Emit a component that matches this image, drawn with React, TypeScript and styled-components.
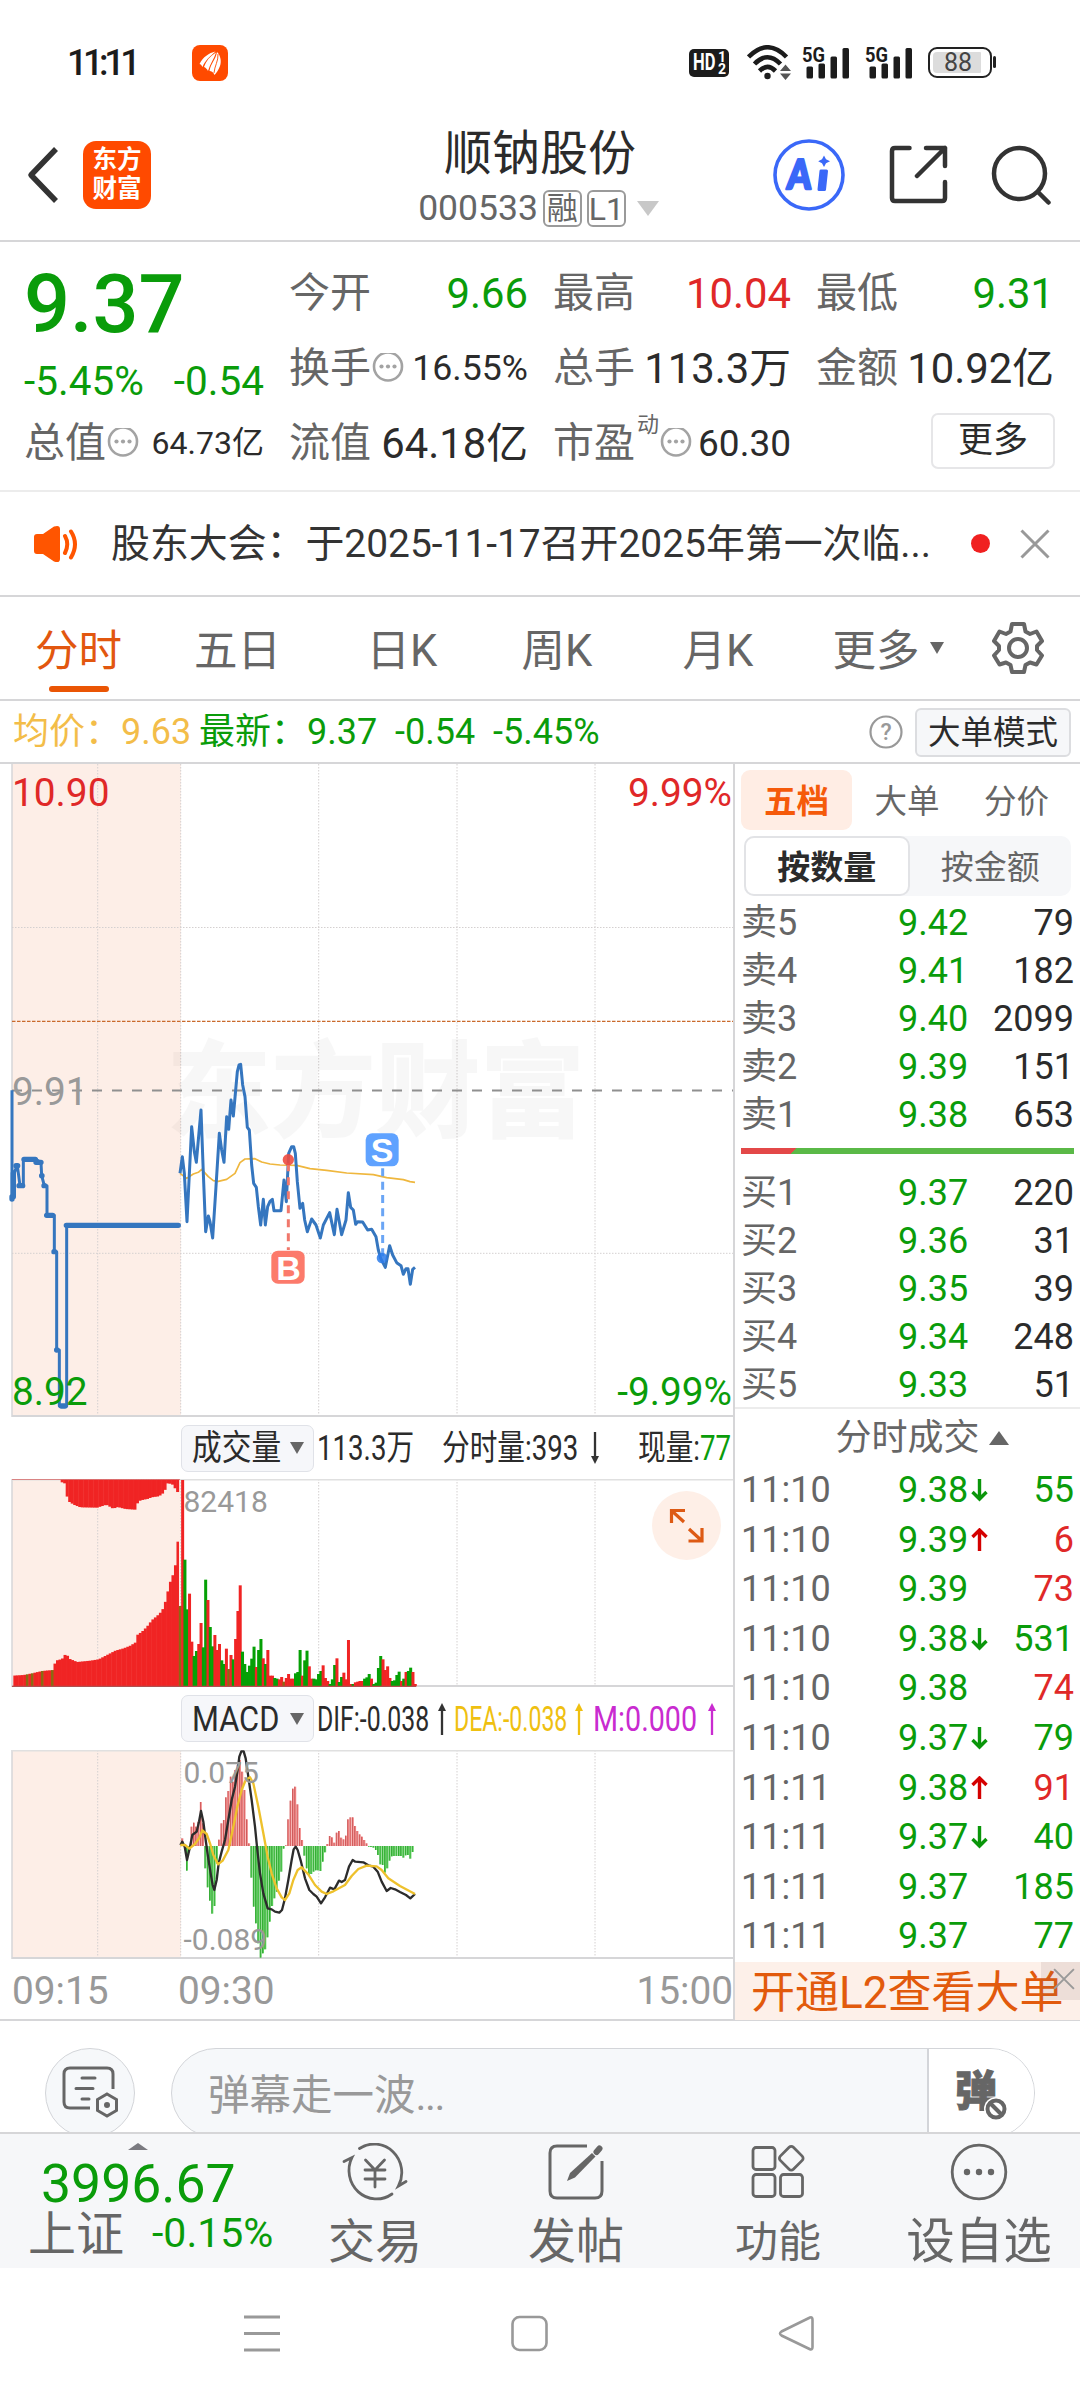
import React from 'react';
import styled, { createGlobalStyle } from 'styled-components';

const GREEN = '#0a9c0a';
const RED = '#e02828';
const INK = '#2b2b2b';
const GREY = '#666';
const LINE = '#d6d6d8';
const ORANGE = '#ea5504';
const FONT = "Roboto, 'Noto Sans CJK SC', sans-serif";

const Global = createGlobalStyle`
  * { box-sizing: border-box; }
  body { margin: 0; background: #fff; font-family: ${FONT}; color: ${INK}; }
  svg { display: block; flex: none; }
`;

const Screen = styled.div`
  width: 1080px;
  height: 2400px;
  display: flex;
  flex-direction: column;
  overflow: hidden;
  background: #fff;
`;

/* ---------- status bar ---------- */
const StatusBar = styled.div`
  height: 110px;
  padding: 15px 88px 0 67px;
  display: flex;
  align-items: center;
  justify-content: space-between;
`;
const StatusSide = styled.div`
  display: flex;
  align-items: center;
`;
const Clock = styled.span`
  width: 125px;
  font-size: 36px;
  line-height: 40px;
  font-weight: 500;
  letter-spacing: -4.4px;
  color: #1c1c1c;
`;
const HdBadge = styled.div`
  width: 40px;
  height: 28px;
  margin-right: 18px;
  padding-left: 4px;
  display: flex;
  align-items: center;
  border-radius: 5px;
  background: #1c1c1c;
  color: #fff;
  font-weight: 700;
`;
const HdText = styled.span`
  width: 24px;
  font-size: 23px;
  line-height: 28px;
  transform: scaleX(0.72);
  transform-origin: 0 50%;
`;
const HdDigits = styled.span`
  display: flex;
  flex-direction: column;
  font-size: 14px;
  line-height: 12px;
  margin-left: 1px;
`;
const Battery = styled.div`
  position: relative;
  width: 64px;
  height: 31px;
  margin-left: 15px;
  padding: 2.5px;
  border: 2.5px solid #222;
  border-radius: 9px;
  &::after {
    content: '';
    position: absolute;
    right: -6px;
    top: 7px;
    width: 3px;
    height: 12px;
    border-radius: 2px;
    background: #222;
  }
`;
const BatteryFill = styled.div`
  width: 48px;
  height: 21px;
  border-radius: 4px 1px 1px 4px;
  background: #dcdcdc;
  font-size: 25px;
  line-height: 22px;
  text-align: center;
  padding-left: 3px;
  color: #444;
`;

/* ---------- header ---------- */
const Header = styled.header`
  height: 132px;
  display: flex;
  border-bottom: 2px solid ${LINE};
`;
const HeaderLeft = styled.div`
  width: 310px;
  padding: 0 0 1px 27px;
  display: flex;
  align-items: center;
  gap: 24px;
`;
const HeaderRight = styled.div`
  width: 310px;
  padding: 0 29px 1px 3px;
  display: flex;
  align-items: center;
  justify-content: space-between;
`;
const Brand = styled.div`
  width: 68px;
  height: 68px;
  padding-top: 4px;
  border-radius: 13px;
  background: #ff4a00;
  color: #fff;
  font-size: 24.5px;
  font-weight: 700;
  line-height: 29px;
  text-align: center;
`;
const HeaderCenter = styled.div`
  flex: 1;
  padding-top: 16px;
  display: flex;
  flex-direction: column;
  align-items: center;
  gap: 8px;
`;
const StockName = styled.div`
  font-size: 48px;
  line-height: 56px;
`;
const CodeRow = styled.div`
  display: flex;
  align-items: center;
  gap: 5px;
  margin: -1px 3px 0 0;
  font-size: 35.5px;
  line-height: 38px;
  color: ${GREY};
`;
const Tag = styled.span<{ $size: number }>`
  width: 39px;
  height: 37px;
  border: 2px solid #9a9a9a;
  border-radius: 6px;
  font-size: ${(p) => p.$size}px;
  line-height: 34px;
  text-align: center;
`;
const Triangle = styled.span<{ $w: number; $h: number; $color?: string; $up?: boolean }>`
  width: 0;
  height: 0;
  flex: none;
  border-left: ${(p) => p.$w / 2}px solid transparent;
  border-right: ${(p) => p.$w / 2}px solid transparent;
  ${(p) => (p.$up ? 'border-bottom' : 'border-top')}: ${(p) => p.$h}px solid ${(p) => p.$color ?? GREY};
`;
const CodeCaret = styled(Triangle)`
  margin-left: 6px;
`;

/* ---------- quote ---------- */
const Quote = styled.section`
  height: 250px;
  padding: 14px 0 0 24px;
  display: grid;
  grid-template-columns: 240px 239px 238px 238px;
  grid-template-rows: repeat(3, 75px);
  column-gap: 25px;
  border-bottom: 2px solid #ececec;
`;
const PriceBlock = styled.div`
  grid-row: span 2;
`;
const BigPrice = styled.div`
  font-size: 81px;
  font-weight: 500;
  line-height: 98px;
  color: ${GREEN};
`;
const ChangeRow = styled.div`
  display: flex;
  justify-content: space-between;
  font-size: 40.5px;
  line-height: 54px;
  color: ${GREEN};
`;
const Cell = styled.div`
  display: flex;
  align-items: center;
  justify-content: space-between;
  line-height: 75px;
  white-space: nowrap;
`;
const CellLabel = styled.span`
  display: flex;
  align-items: center;
  font-size: 41px;
  color: ${GREY};
`;
const CellValue = styled.span<{ $color?: string; $size?: number }>`
  font-size: ${(p) => p.$size ?? 41.8}px;
  color: ${(p) => p.$color ?? INK};
`;
const Sup = styled.sup`
  align-self: flex-start;
  margin: 5px 0 0 2px;
  font-size: 22px;
  line-height: 28px;
`;
const MoreCell = styled.div`
  display: flex;
  align-items: center;
  justify-content: flex-end;
`;
const MoreButton = styled.button`
  width: 124px;
  height: 56px;
  margin: -5px -1px 0 0;
  padding: 0;
  border: 2px solid #e6e6e8;
  border-radius: 7px;
  background: #fff;
  font: 35px/52px ${FONT};
  color: ${INK};
`;

/* ---------- notice ---------- */
const Notice = styled.div`
  height: 105px;
  padding: 0 30px 0 33px;
  display: flex;
  align-items: center;
  border-bottom: 2px solid ${LINE};
`;
const NoticeText = styled.div`
  flex: 1;
  padding-left: 32px;
  font-size: 38.9px;
  line-height: 60px;
  white-space: nowrap;
  color: #333;
`;
const RedDot = styled.span`
  width: 19px;
  height: 19px;
  margin-right: 30px;
  border-radius: 50%;
  background: #f02020;
`;

/* ---------- period tabs ---------- */
const Tabs = styled.nav`
  height: 104px;
  display: grid;
  grid-template-columns: 157px 161px 168px 142px 180px 160px 100px;
  border-bottom: 2px solid ${LINE};
`;
const Tab = styled.div<{ $active?: boolean }>`
  position: relative;
  display: flex;
  align-items: center;
  justify-content: center;
  gap: 10px;
  padding-bottom: 1px;
  font-size: 43.5px;
  color: ${(p) => (p.$active ? '#e2570f' : GREY)};
  &::after {
    content: '';
    display: ${(p) => (p.$active ? 'block' : 'none')};
    position: absolute;
    bottom: 7px;
    width: 60px;
    height: 6px;
    border-radius: 3px;
    background: ${ORANGE};
  }
`;

/* ---------- average / latest line ---------- */
const InfoBar = styled.div`
  height: 63px;
  padding: 1px 9px 0 13px;
  display: flex;
  align-items: center;
  font-size: 36px;
  line-height: 56px;
  border-bottom: 2px solid ${LINE};
`;
const Average = styled.span`
  width: 186px;
  color: #f3bd49;
`;
const Latest = styled.span`
  flex: 1;
  white-space: pre;
  color: ${GREEN};
`;
const ModeButton = styled.button`
  width: 156px;
  height: 49px;
  margin-left: 12px;
  padding: 1px 0 0;
  border: 2px solid #dcdde0;
  border-radius: 6px;
  background: #f6f7f9;
  font: 32.5px/44px ${FONT};
  color: ${INK};
`;

/* ---------- main area ---------- */
const Main = styled.main`
  height: 1257px;
  display: flex;
  border-bottom: 2px solid ${LINE};
`;
const Charts = styled.div`
  width: 735px;
  border-right: 2px solid ${LINE};
`;
const ChartHead = styled.div<{ $h: number }>`
  height: ${(p) => p.$h}px;
  padding-left: 181px;
  display: flex;
  align-items: center;
  font-size: 35px;
  line-height: 46px;
`;
const Picker = styled.div`
  width: 133px;
  height: 47px;
  padding: 0 9px 0 10px;
  margin-right: 3px;
  display: flex;
  align-items: center;
  justify-content: space-between;
  border: 1.5px solid #e0e2e8;
  border-radius: 7px;
  background: #f6f7fa;
`;
const Narrow = styled.span<{ $w: number; $k: number; $color?: string }>`
  display: block;
  width: ${(p) => p.$w}px;
  padding-top: 2px;
  white-space: nowrap;
  color: ${(p) => p.$color ?? INK};
  & > span {
    display: inline-block;
    transform: scaleX(${(p) => p.$k});
    transform-origin: 0 50%;
  }
`;
const TimeAxis = styled.div`
  height: 59px;
  padding: 4px 0 0 12px;
  display: grid;
  grid-template-columns: 166px 1fr auto;
  align-items: center;
  font-size: 38.8px;
  line-height: 50px;
  color: #999;
`;

/* ---------- order book ---------- */
const Book = styled.aside`
  width: 345px;
  display: flex;
  flex-direction: column;
  & > * {
    flex: none;
  }
`;
const BookTabs = styled.div`
  margin: 6px 9px 6px 6px;
  display: grid;
  grid-template-columns: 111px 110px 1fr;
`;
const BookTab = styled.div<{ $active?: boolean }>`
  height: 60px;
  border-radius: 9px;
  font-size: 32.5px;
  line-height: 64px;
  text-align: center;
  font-weight: ${(p) => (p.$active ? 700 : 400)};
  color: ${(p) => (p.$active ? '#f55a0a' : GREY)};
  background: ${(p) => (p.$active ? '#ffede4' : 'transparent')};
`;
const Segment = styled.div`
  height: 60px;
  margin: 0 9px 3px;
  display: flex;
  border-radius: 10px;
  background: #f6f7f9;
`;
const SegmentItem = styled.div<{ $active?: boolean }>`
  flex: 1;
  font-size: 33px;
  line-height: 64px;
  text-align: center;
  color: ${GREY};
  ${(p) =>
    p.$active &&
    `color: ${INK}; font-weight: 700; background: #fff; border: 2px solid #e2e3e6; border-radius: 10px; line-height: 60px;`}
`;
const Level = styled.div<{ $h: number }>`
  height: ${(p) => p.$h}px;
  padding: 0 6px;
  display: grid;
  grid-template-columns: 157px 73px 20px 1fr;
  align-items: center;
  font-size: 36px;
  line-height: ${(p) => p.$h}px;
`;
const Muted = styled.span`
  color: ${GREY};
`;
const Price = styled.span`
  color: ${GREEN};
`;
const Amount = styled.span<{ $color?: string }>`
  text-align: right;
  color: ${(p) => p.$color ?? INK};
`;
const Ratio = styled.div`
  height: 6px;
  margin: 9px 6px 15px;
  background: linear-gradient(135deg, #e34848 0 39px, #5ab947 39px);
`;
const TradesHead = styled.div`
  height: 59px;
  margin-top: -2px;
  padding: 0 0 0 29px;
  display: flex;
  align-items: center;
  justify-content: center;
  gap: 9px;
  border-top: 2px solid #ececec;
  font-size: 36px;
  line-height: 56px;
  color: ${GREY};
`;
const Promo = styled.div`
  position: relative;
  height: 58px;
  padding-left: 16px;
  background: #fdf0e9;
  font-size: 44px;
  line-height: 63px;
  white-space: nowrap;
  color: #e25a0c;
`;
const PromoClose = styled.div`
  position: absolute;
  top: 0;
  right: 0;
  width: 39px;
  height: 38px;
  padding: 0 0 4px 6px;
  display: flex;
  align-items: center;
  justify-content: center;
  background: rgba(120, 100, 95, 0.12);
`;

/* ---------- comment bar ---------- */
const CommentBar = styled.div`
  height: 111px;
  padding: 27px 45px 0;
  display: flex;
  gap: 36px;
  overflow: hidden;
`;
const RoundButton = styled.div`
  width: 90px;
  height: 90px;
  flex: none;
  display: flex;
  align-items: center;
  justify-content: center;
  border: 1.5px solid #d3d5d9;
  border-radius: 50%;
  background: #f6f8fa;
`;
const InputPill = styled.div`
  flex: 1;
  height: 90px;
  display: flex;
  overflow: hidden;
  border: 1.5px solid #d3d5d9;
  border-radius: 45px;
  background: #f6f8fa;
`;
const Placeholder = styled.div`
  flex: 1;
  padding-left: 36px;
  font-size: 41.5px;
  line-height: 94px;
  color: #999;
`;
const Ellipsis = styled.span`
  letter-spacing: -1.4px;
`;
const BarrageToggle = styled.div`
  position: relative;
  width: 107px;
  padding-left: 26px;
  border-left: 2px solid #d3d5d9;
  background: #fff;
  font-size: 42px;
  font-weight: 900;
  line-height: 86px;
  color: ${GREY};
  -webkit-text-stroke: 1px ${GREY};
`;
const BanBadge = styled.div`
  position: absolute;
  left: 55px;
  top: 48px;
`;

/* ---------- bottom bar ---------- */
const Bottom = styled.div`
  height: 136px;
  display: grid;
  grid-template-columns: 290px 170px 232px 172px 230px;
  border-top: 2px solid ${LINE};
  background: #f6f7f9;
`;
const IndexBlock = styled.div`
  position: relative;
  padding: 20px 0 0 28px;
`;
const IndexCaret = styled(Triangle)`
  position: absolute;
  left: 128px;
  top: 9px;
`;
const IndexValue = styled.div`
  padding-left: 13px;
  font-size: 53.5px;
  line-height: 60px;
  color: ${GREEN};
`;
const IndexRow = styled.div`
  display: flex;
  align-items: center;
  gap: 28px;
  margin-top: -6px;
  font-size: 48px;
  line-height: 54px;
  color: ${GREY};
`;
const IndexChange = styled.span`
  margin-top: -4px;
  font-size: 41px;
  color: ${GREEN};
`;
const Action = styled.div<{ $size: number }>`
  display: flex;
  flex-direction: column;
  align-items: center;
  padding-top: 9px;
  font-size: ${(p) => p.$size}px;
  line-height: 62px;
  color: ${GREY};
  white-space: nowrap;
  & > svg {
    margin-bottom: 10px;
  }
`;
const SystemNav = styled.div`
  flex: 1;
  padding: 46px 265px 0 244px;
  display: flex;
  justify-content: space-between;
`;

/* ---------- icons ---------- */
const AppIcon = () => (
  <svg width="36" height="36" viewBox="0 0 36 36">
    <rect width="36" height="36" rx="8" fill="#ff4a00" />
    <path d="M7.500 19C11 12 17 8 23.500 6.500C17 12 13 16 10.500 22C9.500 20 8.500 19 7.500 19Z" fill="#fff" />
    <path d="M12 22C14 16 18 11 24 7.500C22 14 18 19 16 26C15 24 13.500 22.500 12 22Z" fill="#fff" />
    <path d="M17.500 26C18.500 19 24 14 25 7C29 11 29.500 17 28 21C26.500 25 24.500 28 22.500 30C21.500 27.500 19.500 26 17.500 26Z" fill="#fff" />
    <path d="M22 28C22.500 21 26.500 16 26 9" stroke="#ff4a00" strokeWidth="0.900" fill="none" />
  </svg>
);
const WifiIcon = () => (
  <svg width="46" height="35" viewBox="0 0 46 35" fill="none" stroke="#1c1c1c" strokeWidth="4.600">
    <path d="M1.500 12Q20.500 -7.500 39.500 12" />
    <path d="M7.500 19Q20.500 5.500 33.500 19" />
    <path d="M12.500 26Q20.500 18 28.500 26" />
    <circle cx="20.500" cy="31" r="3.200" fill="#1c1c1c" stroke="none" />
    <path d="M33 26L38.500 19.500L44 26ZM33 28.500L38.500 35L44 28.500Z" fill="#555" stroke="none" />
  </svg>
);
const SignalIcon = ({ gap }: { gap: number }) => (
  <svg width={47 + gap} height="34" viewBox={`${-gap} 0 ${47 + gap} 34`} overflow="visible">
    <text x="-1" y="16" fontFamily="Roboto" fontWeight="700" fontSize="21" textLength="23" lengthAdjust="spacingAndGlyphs" fill="#1c1c1c">5G</text>
    {[[3.500, 20.500], [15.500, 17.500], [27.500, 10.500], [39.500, 2]].map(([x, y]) => (
      <rect key={x} x={x} y={y} width="6.500" height={32.500 - y} rx="1.500" fill="#1c1c1c" />
    ))}
  </svg>
);
const BackIcon = () => (
  <svg width="32" height="56" viewBox="0 0 32 56" fill="none" stroke="#333" strokeWidth="5.500">
    <path d="M29 2L4 28L29 54" strokeLinejoin="round" />
  </svg>
);
const AiIcon = () => (
  <svg width="72" height="72" viewBox="0 0 72 72">
    <circle cx="36" cy="36" r="34" fill="#fff" stroke="#3a68f8" strokeWidth="3.600" />
    <g transform="translate(13.500 49.500) skewX(-4) scale(0.830 1)">
      <text fontFamily="Lato" fontWeight="900" fontSize="41" fill="#3a68f8" stroke="#3a68f8" strokeWidth="2.600" strokeLinejoin="round">A</text>
    </g>
    <path d="M48 32H53.500L51.500 50.500H46Z" fill="#3a68f8" stroke="#3a68f8" strokeWidth="3" strokeLinejoin="round" />
    <path d="M51 16.500L53 20.300L57 22.300L53 24.300L51 28L49 24.300L45.200 22.300L49 20.300Z" fill="#3a68f8" />
  </svg>
);
const ShareIcon = () => (
  <svg width="59" height="59" viewBox="0 0 59 59" fill="none" stroke="#333" strokeWidth="4.500" strokeLinecap="round" strokeLinejoin="round">
    <path d="M20.500 3H6Q3 3 3 6V53Q3 56 6 56H53Q56 56 56 53V37" />
    <path d="M37 3H56V21M56 3L28 31" />
  </svg>
);
const SearchIcon = () => (
  <svg width="60" height="60" viewBox="0 0 60 60" fill="none" stroke="#333" strokeWidth="4.500" strokeLinecap="round">
    <circle cx="28.500" cy="28.500" r="25.500" />
    <path d="M47 47L57.500 57.500" />
  </svg>
);
const DotsIcon = () => (
  <svg width="33" height="32" viewBox="0 0 33 32">
    <circle cx="17" cy="13.500" r="14" fill="none" stroke="#a3a3a3" strokeWidth="2.600" />
    {[10.500, 17, 23.500].map((x) => <circle key={x} cx={x} cy="13.500" r="2.100" fill="#a3a3a3" />)}
  </svg>
);
const SpeakerIcon = () => (
  <svg width="46" height="38" viewBox="0 0 46 38">
    <path d="M4 9H10L21 1.500Q27 -0.500 27 4V34Q27 38.500 21 36.500L10 29H4Q1 29 1 26V12Q1 9 4 9Z" fill="#ff5500" />
    <path d="M32 11Q36.500 19 32 28M38 6.500Q46 19 38 32.500" fill="none" stroke="#ff5500" strokeWidth="4" strokeLinecap="round" />
  </svg>
);
const CloseIcon = ({ size, w }: { size: number; w: number }) => (
  <svg width={size} height={size} viewBox="0 0 30 30" stroke="#999" strokeWidth={w}>
    <path d="M1.500 1.500L28.500 28.500M28.500 1.500L1.500 28.500" />
  </svg>
);
const GearIcon = () => (
  <svg width="52" height="54" viewBox="0 0 52 54" fill="none" stroke={GREY} strokeWidth="4">
    <path d="M20 3H32L33.500 10.500L38 13L44.500 10.500L50 20L45 25V29L50 34.500L44.500 43.500L38 41.500L33.500 44L32 51H20L18.500 44L14 41.500L7.500 43.500L2 34.500L7 29V25L2 20L7.500 10.500L14 13L18.500 10.500Z" strokeLinejoin="round" />
    <circle cx="26" cy="27" r="9" />
  </svg>
);
const HelpIcon = () => (
  <svg width="34" height="34" viewBox="0 0 34 34">
    <circle cx="17" cy="17" r="15.500" fill="none" stroke="#999" strokeWidth="2.200" />
    <text x="17" y="25" textAnchor="middle" fontFamily="Roboto" fontWeight="500" fontSize="23" fill="#999">?</text>
  </svg>
);
const TradeArrow = ({ up }: { up?: boolean }) => (
  <svg width="17" height="24" viewBox="0 0 17 24" fill="none" stroke={up ? '#d40000' : '#0a960a'} strokeWidth="3.400">
    <path d={up ? 'M8.500 23V2M1.500 9L8.500 2L15.500 9' : 'M8.500 0V20M1.500 13L8.500 20L15.500 13'} />
  </svg>
);
const ThinArrow = ({ up, color, box }: { up?: boolean; color: string; box: number }) => (
  <svg width={box} height="32" viewBox={`0 0 ${box} 32`}>
    <g transform={up ? undefined : 'rotate(180 4 16)'}>
      <path d="M4 4V32" stroke={color} strokeWidth="2.300" />
      <path d="M0 8L4 0L8 8Z" fill={color} />
    </g>
  </svg>
);
const NoteIcon = () => (
  <svg width="58" height="54" viewBox="0 0 58 54" fill="none" stroke={GREY} strokeWidth="3">
    <path d="M29 42H9Q3 42 3 36V8Q3 2 9 2H46Q52 2 52 8V23" />
    <path d="M21 12H34M15 22.500H32M21 33H28" strokeLinecap="round" />
    <path d="M46 28L55.500 33.500V44.500L46 50L36.500 44.500V33.500Z" />
    <circle cx="46" cy="39" r="3" fill={GREY} stroke="none" />
  </svg>
);
const BanIcon = () => (
  <svg width="24" height="24" viewBox="0 0 24 24">
    <circle cx="12" cy="12" r="12" fill="#fff" />
    <circle cx="12" cy="12" r="8.500" fill="#fff" stroke={GREY} strokeWidth="4" />
    <path d="M6 6L18 18" stroke={GREY} strokeWidth="4" />
  </svg>
);
const TradeIcon = () => (
  <svg width="66" height="58" viewBox="0 0 66 58" fill="none" stroke={GREY} strokeWidth="2.800" strokeLinecap="round">
    <path d="M17.500 5.500A27.500 28.500 0 0 1 56.500 43L64 38.500" />
    <path d="M50 51A27.500 28.500 0 0 1 10 14.500L2 18.500" />
    <path d="M23.500 17L33 27L42.500 17M23 27H43M23 36H43M33 27V44" />
  </svg>
);
const PostIcon = () => (
  <svg width="56" height="58" viewBox="0 0 56 58" fill="none" stroke={GREY} strokeWidth="3">
    <path d="M39 3H9Q2 3 2 10V48Q2 55 9 55H47Q54 55 54 48V18" />
    <path d="M19 38L22 30L44 10L47.500 13.500L27 34.500Z" fill={GREY} stroke="none" />
    <path d="M48.500 9L51.500 5.500" strokeWidth="6" strokeLinecap="round" />
  </svg>
);
const GridIcon = () => (
  <svg width="54" height="58" viewBox="0 0 54 58" fill="none" stroke={GREY} strokeWidth="2.800">
    <rect x="2" y="4.500" width="22" height="22" rx="3" />
    <rect x="2" y="31.500" width="22" height="22" rx="3" />
    <rect x="29.500" y="31.500" width="22" height="22" rx="3" />
    <rect x="31" y="6" width="18.500" height="18.500" rx="3" transform="rotate(45 40.250 15.250)" />
  </svg>
);
const MoreIcon = () => (
  <svg width="58" height="58" viewBox="0 0 58 58">
    <circle cx="29" cy="29" r="26.800" fill="none" stroke={GREY} strokeWidth="2.800" />
    {[17, 29, 41].map((x) => <circle key={x} cx={x} cy="29" r="3.200" fill={GREY} />)}
  </svg>
);

/* ---------- chart data: drawn on a grid of thirds of a pixel ---------- */
const PRICE =
  '540,520 547,470 553,520 561,665 575,380 583,455 589,487 603,330 610,520 617,695 625,648 630,665 638,714 648,560 658,400 665,450 672,487 680,350 686,388 693,300 700,348 712,215 717,195 722,193 728,255 735,290 742,382 748,390 755,495 761,550 769,562 775,620 782,675 790,598 796,675 803,620 810,604 817,598 822,632 843,632 852,540 859,605 866,460 875,440 881,440 886,460 892,545 900,625 908,610 914,660 922,695 935,657 948,675 961,714 970,675 989,638 1003,704 1011,628 1025,704 1038,660 1045,578 1052,622 1060,630 1067,673 1073,665 1088,666 1103,690 1115,688 1128,710 1135,750 1142,775 1156,802 1169,737 1178,765 1190,788 1203,797 1210,823 1218,806 1224,806 1231,853 1238,808 1245,802';
const AVG =
  '540,520 560,535 580,522 595,517 605,508 625,530 640,542 655,544 680,538 705,520 720,488 735,477 765,476 785,486 810,492 840,495 890,496 930,506 980,511 1040,519 1120,524 1160,533 1210,539 1230,545 1245,547';
const DIF =
  '541,465 547,455 554,470 561,510 570,470 577,435 590,425 597,395 603,363 610,395 617,450 624,500 632,550 638,585 643,600 650,570 656,520 665,485 675,450 685,390 695,330 705,290 713,240 718,200 724,184 731,184 737,205 745,260 755,330 765,410 772,480 780,550 790,610 803,655 815,658 825,665 838,668 846,660 855,625 865,570 875,510 881,478 887,470 893,480 903,515 915,565 928,600 940,612 950,620 963,640 975,622 990,593 1003,598 1017,572 1025,576 1035,570 1047,530 1058,510 1066,515 1090,517 1105,526 1120,530 1133,545 1145,575 1160,603 1172,594 1185,598 1200,606 1218,615 1231,625 1245,612';
const DEA =
  '541,465 555,465 568,476 585,462 597,445 607,421 620,432 630,460 640,495 654,523 668,512 685,480 697,425 712,350 725,300 737,270 750,262 760,280 775,350 790,430 803,500 815,550 830,595 845,622 855,630 868,610 880,570 893,540 905,532 925,553 945,585 965,605 980,612 1000,604 1035,585 1055,558 1075,537 1100,527 1130,529 1145,540 1165,565 1200,588 1245,612';

const VOLUME =
  '588m 210r 449g 598g 551r 695r 738g 723g 702r 639r 712g 509g 570r 651g 709g 675r 720r 702r 751g 762g 716r 777m 735r 748g 687r 603r 526r 725g 762g 786g 767g 746g 710g 771r 720g 687g 745r 762g 720r 797r 797r 804g 806g 808r 801r 815m 804r 792r 806r 806r 790g 786g 720g 797r 751g 722g 769r 806r 806g 808g 792g 783g 766r 804r 813r 822g 808g 765g 745r 816g 801g 788r 808r 690r 822r 822g 817r 815r 813r 813r 806g 802g 792g 806r 822g 818g 774g 738g 748r 780r 769r 804r 813g 811g 795g 785g 813r 806g 786r 783g 773g 786r 822r'.split(' ');
const HIST = [
  445, 462, 542, 480, 410, 398, 410, 395, 336, 400, 535, 592, 632, 671, 648, 520, 449, 400, 390, 322, 303, 260, 275, 240, 225, 210, 245,
  300, 388, 460, 563, 650, 700, 760, 803, 790, 778, 742, 695, 648, 625, 605, 572, 545, 476, 466, 388, 332, 296, 290, 343, 414, 450, 497,
  535, 555, 552, 545, 541, 541, 543, 515, 487, 462, 438, 442, 458, 428, 423, 443, 448, 437, 388, 382, 382, 408, 423, 433, 440, 450, 460,
  470, 471, 473, 480, 495, 523, 525, 548, 535, 512, 499, 498, 498, 498, 498, 503, 496, 495, 506, 486,
];
const AUCTION: number[][] = [
  [37, 797], [70, 795], [95, 790], [125, 783], [158, 780], [166, 752], [185, 747], [197, 730], [206, 746], [230, 756], [270, 752], [295, 748], [320, 735],
  [345, 722], [370, 715], [390, 707], [406, 697], [412, 674], [425, 665], [440, 650], [455, 630], [470, 618], [485, 603], [493, 583],
  [501, 550], [508, 520], [516, 500], [524, 475], [532, 395], [540, 395],
];
const UNMATCHED: number[][] = [
  [182, 217], [192, 217], [199, 257], [206, 275], [220, 284], [240, 292], [290, 293], [318, 284], [338, 296], [352, 291], [375, 297], [404, 299],
  [412, 277], [420, 271], [445, 266], [452, 262], [475, 259], [485, 252], [492, 245], [500, 220], [515, 222], [524, 235], [532, 247], [540, 247],
];
const sample = (pts: number[][], x: number) => {
  const i = Math.max(1, pts.findIndex((p) => p[0] >= x));
  const [x0, y0] = pts[i - 1];
  const [x1, y1] = pts[i];
  return y0 + ((y1 - y0) * Math.max(0, x - x0)) / (x1 - x0);
};
const FILL: Record<string, string> = { r: '#f02424', g: '#05a005', m: '#8a6a12' };
const GRID_X = [97.700, 180.700, 318.700, 457, 595];

const GridLines = ({ h }: { h: number }) => (
  <g>
    <rect x="12" y="0" width="169" height={h} fill="#fdeee7" />
    {GRID_X.map((x) => (
      <line key={x} x1={x} x2={x} y1="0" y2={h} stroke="#d4d0d0" strokeWidth="1" strokeDasharray="1.500 1.500" />
    ))}
    <line x1="12" x2="12" y1="0" y2={h} stroke="#d6d6d8" strokeWidth="1.500" />
    <line x1="12" x2="733" y1={h - 1} y2={h - 1} stroke="#d6d6d8" strokeWidth="2" />
  </g>
);

const PriceChart = () => (
  <svg width="733" height="653" viewBox="0 764 733 653" fontFamily={FONT}>
    <g transform="translate(0 764)"><GridLines h={653} /></g>
    <text x="167" y="1129" fontSize="104" letterSpacing="0.500" fontWeight="700" fill="#000" stroke="#000" strokeWidth="2" opacity="0.026">东方财富</text>
    <path d="M12 927.500H733M12 1253.300H733" stroke="#d4d0d0" strokeDasharray="1.500 1.500" />
    <path d="M12 1021.300H733" stroke="#c96a2c" strokeWidth="1.300" strokeDasharray="3.500 1.500" />
    <path d="M12 1090.500H733" stroke="#909090" strokeWidth="1.800" strokeDasharray="10 10" />
    <g fontSize="38.800">
      <text x="12" y="1105" fill="#999">9.91</text>
      <text x="12" y="806" fill={RED}>10.90</text>
      <text x="732" y="806" textAnchor="end" fill={RED}>9.99%</text>
      <text x="732" y="1405" textAnchor="end" fill={GREEN}>-9.99%</text>
    </g>
    <g transform="translate(0 1000) scale(0.33333)" fill="none" strokeLinejoin="round">
      <polyline points={AVG} stroke="#efb73e" strokeWidth="5" />
      <path d="M36 271V597L44 515L52 497L60 557H70V478H108L123 488L125 527L133 557H141V646H163V755H170V1050H178V1218H200V676H537" stroke="#3576bf" strokeWidth="9" />
      <path d="M36 597V590M40 590V520M48 497H53M57 557H68M72 478H106M108 487H123M125 527H126M132 557H134M140 646H158M162 755H164M170 1050H171M184 1218H195M199 676H535" stroke="#3576bf" strokeWidth="16" strokeLinecap="round" />
      <polyline points={PRICE} stroke="#3576bf" strokeWidth="9" />
      <path d="M865 490V750" stroke="#f0786c" strokeWidth="9" strokeDasharray="24 18" />
      <path d="M1148 505V770" stroke="#6aa5f5" strokeWidth="9" strokeDasharray="24 16" />
      <circle cx="865" cy="479" r="17" fill="#ee4c40" fillOpacity="0.9" />
      <circle cx="1146" cy="774" r="16" fill="#2c7bea" fillOpacity="0.85" />
      <rect x="814" y="752" width="100" height="99" rx="20" fill="#fc7a6b" />
      <rect x="1097" y="400" width="99" height="99" rx="20" fill="#5fa2ff" />
    </g>
    <g fontFamily="Liberation Sans" fontWeight="700" fontSize="34" fill="#fff" textAnchor="middle">
      <text x="288.500" y="1279.500">B</text>
      <text x="382" y="1162">S</text>
    </g>
    <text x="12" y="1405" fontSize="38.800" fill={GREEN}>8.92</text>
  </svg>
);

const VolumeChart = () => (
  <svg width="733" height="208" viewBox="0 1479 733 208" fontFamily={FONT}>
    <g transform="translate(0 1479)"><GridLines h={208} /></g>
    <path d="M12 1479.700H733" stroke="#e0e0e0" strokeWidth="1.500" />
    <text x="183.500" y="1512" fontSize="30" fill="#999">82418</text>
    <g transform="translate(0 1410) scale(0.33333)">
      {Array.from({ length: 66 }, (_, i) => {
        const x = 40 + i * 7.530;
        const y = sample(AUCTION, x + 3);
        const mixed = [5, 7, 11, 15].includes(i);
        return <rect key={i} x={x} y={y} width={i === 65 ? 7.500 : 9} height={829 - y} fill={mixed ? FILL.m : FILL.r} />;
      })}
      {Array.from({ length: 47 }, (_, i) => {
        const x = 182 + i * 7.530;
        return <rect key={i} x={x} y="208" width={9} height={sample(UNMATCHED, x + 3) - 208} fill={FILL.r} />;
      })}
      {VOLUME.map((v, i) => {
        const y = parseInt(v, 10);
        return <rect key={i} x={536.500 + i * 6.910} y={y} width={9} height={829 - y} fill={FILL[v.slice(-1)]} />;
      })}
      <path d="M36 829H1248" stroke="#b05050" strokeWidth="4" />
      <path d="M36 208H540" stroke="#d87070" strokeWidth="3" />
    </g>
    <circle cx="686.500" cy="1525.500" r="34.500" fill="#feefe7" />
    <path d="M671.500 1523V1510.500H685M672 1511L684 1522M702 1528V1541H688.500M701.500 1540.500L689 1529" fill="none" stroke="#dd5a14" strokeWidth="3.200" />
  </svg>
);

const MacdChart = () => (
  <svg width="733" height="209" viewBox="0 1750 733 209" fontFamily={FONT}>
    <g transform="translate(0 1750)"><GridLines h={209} /></g>
    <path d="M12 1750.700H733" stroke="#e0e0e0" strokeWidth="1.500" />
    <g transform="translate(0 1690) scale(0.33333)" fill="none" strokeLinejoin="round">
      {HIST.map((y, i) => (
        <g key={i}>
          <rect x={544.500 + i * 6.910} y={Math.min(y, 468)} width="5.500" height={Math.abs(468 - y)} fill={y < 468 ? '#f08080' : '#55cc55'} />
          <rect x={544.500 + i * 6.910} y={Math.min(y, 468)} width="2" height={Math.abs(468 - y)} fill={y < 468 ? '#c04848' : '#229a22'} />
        </g>
      ))}
      <polyline points={DIF} stroke="#2c2c2c" strokeWidth="7" />
      <polyline points={DEA} stroke="#eec12c" strokeWidth="7" />
    </g>
    <g fontSize="30" fill="#999">
      <text x="183.500" y="1783">0.075</text>
      <text x="183.500" y="1950">-0.089</text>
    </g>
  </svg>
);

const SELLS = [['卖5', '9.42', '79'], ['卖4', '9.41', '182'], ['卖3', '9.40', '2099'], ['卖2', '9.39', '151'], ['卖1', '9.38', '653']];
const BUYS = [['买1', '9.37', '220'], ['买2', '9.36', '31'], ['买3', '9.35', '39'], ['买4', '9.34', '248'], ['买5', '9.33', '51']];
const TRADES: [string, string, string, string, string][] = [
  ['11:10', '9.38', 'down', '55', GREEN],
  ['11:10', '9.39', 'up', '6', RED],
  ['11:10', '9.39', '', '73', RED],
  ['11:10', '9.38', 'down', '531', GREEN],
  ['11:10', '9.38', '', '74', RED],
  ['11:10', '9.37', 'down', '79', GREEN],
  ['11:11', '9.38', 'up', '91', RED],
  ['11:11', '9.37', 'down', '40', GREEN],
  ['11:11', '9.37', '', '185', GREEN],
  ['11:11', '9.37', '', '77', GREEN],
];

const Levels = ({ rows }: { rows: string[][] }) => (
  <>
    {rows.map(([label, price, amount]) => (
      <Level key={label} $h={48}>
        <Muted>{label}</Muted>
        <Price>{price}</Price>
        <span />
        <Amount>{amount}</Amount>
      </Level>
    ))}
  </>
);

export default function App() {
  return (
    <Screen>
      <Global />
      <StatusBar>
        <StatusSide>
          <Clock>11:11</Clock>
          <AppIcon />
        </StatusSide>
        <StatusSide>
          <HdBadge>
            <HdText>HD</HdText>
            <HdDigits>
              <span>1</span>
              <span>2</span>
            </HdDigits>
          </HdBadge>
          <WifiIcon />
          <SignalIcon gap={10} />
          <SignalIcon gap={16} />
          <Battery>
            <BatteryFill>88</BatteryFill>
          </Battery>
        </StatusSide>
      </StatusBar>

      <Header>
        <HeaderLeft>
          <BackIcon />
          <Brand>
            东方
            <br />
            财富
          </Brand>
        </HeaderLeft>
        <HeaderCenter>
          <StockName>顺钠股份</StockName>
          <CodeRow>
            000533
            <Tag $size={31}>融</Tag>
            <Tag $size={32}>L1</Tag>
            <CodeCaret $w={22} $h={15} $color="#c8c8c8" />
          </CodeRow>
        </HeaderCenter>
        <HeaderRight>
          <AiIcon />
          <ShareIcon />
          <SearchIcon />
        </HeaderRight>
      </Header>

      <Quote>
        <PriceBlock>
          <BigPrice>9.37</BigPrice>
          <ChangeRow>
            <span>-5.45%</span>
            <span>-0.54</span>
          </ChangeRow>
        </PriceBlock>
        <Cell><CellLabel>今开</CellLabel><CellValue $color={GREEN}>9.66</CellValue></Cell>
        <Cell><CellLabel>最高</CellLabel><CellValue $color={RED}>10.04</CellValue></Cell>
        <Cell><CellLabel>最低</CellLabel><CellValue $color={GREEN}>9.31</CellValue></Cell>
        <Cell><CellLabel>换手<DotsIcon /></CellLabel><CellValue $size={35.7}>16.55%</CellValue></Cell>
        <Cell><CellLabel>总手</CellLabel><CellValue>113.3万</CellValue></Cell>
        <Cell><CellLabel>金额</CellLabel><CellValue>10.92亿</CellValue></Cell>
        <Cell><CellLabel>总值<DotsIcon /></CellLabel><CellValue $size={32}>64.73亿</CellValue></Cell>
        <Cell><CellLabel>流值</CellLabel><CellValue>64.18亿</CellValue></Cell>
        <Cell><CellLabel>市盈<Sup>动</Sup><DotsIcon /></CellLabel><CellValue $size={37}>60.30</CellValue></Cell>
        <MoreCell><MoreButton>更多</MoreButton></MoreCell>
      </Quote>

      <Notice>
        <SpeakerIcon />
        <NoticeText>股东大会：于2025-11-17召开2025年第一次临...</NoticeText>
        <RedDot />
        <CloseIcon size={30} w={3} />
      </Notice>

      <Tabs>
        <Tab $active>分时</Tab>
        <Tab>五日</Tab>
        <Tab>日K</Tab>
        <Tab>周K</Tab>
        <Tab>月K</Tab>
        <Tab>更多<Triangle $w={15} $h={12} /></Tab>
        <Tab><GearIcon /></Tab>
      </Tabs>

      <InfoBar>
        <Average>均价：9.63</Average>
        <Latest>最新：9.37{'  '}-0.54{'  '}-5.45%</Latest>
        <HelpIcon />
        <ModeButton>大单模式</ModeButton>
      </InfoBar>

      <Main>
        <Charts>
          <PriceChart />
          <ChartHead $h={62}>
            <Picker>
              <Narrow $w={92} $k={0.85}><span>成交量</span></Narrow>
              <Triangle $w={15} $h={12} />
            </Picker>
            <Narrow $w={125} $k={0.79}><span>113.3万</span></Narrow>
            <Narrow $w={149} $k={0.79}><span>分时量:393</span></Narrow>
            <ThinArrow color="#333" box={47} />
            <Narrow $w={95} $k={0.79}><span>现量:<Price>77</Price></span></Narrow>
          </ChartHead>
          <VolumeChart />
          <ChartHead $h={63}>
            <Picker>
              <Narrow $w={92} $k={0.88}><span>MACD</span></Narrow>
              <Triangle $w={15} $h={12} />
            </Picker>
            <Narrow $w={121} $k={0.71}><span>DIF:-0.038</span></Narrow>
            <ThinArrow up color="#333" box={16} />
            <Narrow $w={121} $k={0.66} $color="#efc010"><span>DEA:-0.038</span></Narrow>
            <ThinArrow up color="#efc010" box={18} />
            <Narrow $w={115} $k={0.82} $color="#c92bd0"><span>M:0.000</span></Narrow>
            <ThinArrow up color="#c92bd0" box={10} />
          </ChartHead>
          <MacdChart />
          <TimeAxis>
            <span>09:15</span>
            <span>09:30</span>
            <span>15:00</span>
          </TimeAxis>
        </Charts>

        <Book>
          <BookTabs>
            <BookTab $active>五档</BookTab>
            <BookTab>大单</BookTab>
            <BookTab>分价</BookTab>
          </BookTabs>
          <Segment>
            <SegmentItem $active>按数量</SegmentItem>
            <SegmentItem>按金额</SegmentItem>
          </Segment>
          <Levels rows={SELLS} />
          <Ratio />
          <Levels rows={BUYS} />
          <TradesHead>
            分时成交
            <Triangle $w={21} $h={14} $up />
          </TradesHead>
          {TRADES.map(([time, price, dir, amount, color], i) => (
            <Level key={i} $h={49.6}>
              <Muted>{time}</Muted>
              <Price>{price}</Price>
              {dir ? <TradeArrow up={dir === 'up'} /> : <span />}
              <Amount $color={color}>{amount}</Amount>
            </Level>
          ))}
          <Promo>
            开通L2查看大单
            <PromoClose><CloseIcon size={22} w={2.6} /></PromoClose>
          </Promo>
        </Book>
      </Main>

      <CommentBar>
        <RoundButton><NoteIcon /></RoundButton>
        <InputPill>
          <Placeholder>弹幕走一波<Ellipsis>...</Ellipsis></Placeholder>
          <BarrageToggle>
            弹
            <BanBadge><BanIcon /></BanBadge>
          </BarrageToggle>
        </InputPill>
      </CommentBar>

      <Bottom>
        <IndexBlock>
          <IndexCaret $w={21} $h={7} $color="#7a7a80" $up />
          <IndexValue>3996.67</IndexValue>
          <IndexRow>上证<IndexChange>-0.15%</IndexChange></IndexRow>
        </IndexBlock>
        <Action $size={47}><TradeIcon />交易</Action>
        <Action $size={48}><PostIcon />发帖</Action>
        <Action $size={43}><GridIcon />功能</Action>
        <Action $size={48.5}><MoreIcon />设自选</Action>
      </Bottom>

      <SystemNav>
        <svg width="36" height="38" viewBox="0 0 36 38" stroke="#999" strokeWidth="3">
          <path d="M0 3H36M0 19.500H36M0 36H36" />
        </svg>
        <svg width="37" height="38" viewBox="0 0 37 38">
          <rect x="1.500" y="3" width="34" height="33" rx="7" fill="none" stroke="#999" strokeWidth="2.600" />
        </svg>
        <svg width="37" height="38" viewBox="0 0 37 38">
          <path d="M32 3.500Q34.500 2.500 34.500 6V33Q34.500 36.500 31.500 35L3.500 21.500Q0.500 19.500 3.500 17.500Z" fill="none" stroke="#999" strokeWidth="2.600" />
        </svg>
      </SystemNav>
    </Screen>
  );
}
